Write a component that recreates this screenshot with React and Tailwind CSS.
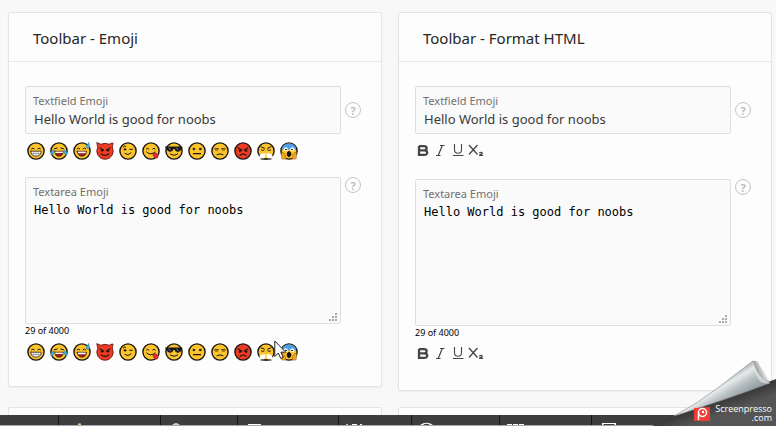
import React, { useId } from "react";

const INK = "#1b1410";

function Face({ fill = "#fcc42c", children }) {
  return (
    <svg viewBox="0 0 18 18" className="block size-[18px]" aria-hidden="true" fill="none" stroke={INK} strokeLinecap="round" strokeLinejoin="round">
      <circle cx="9" cy="9" r="8.1" fill={fill} strokeWidth="1.4" />
      {children}
    </svg>
  );
}

const emojis = [
  {
    name: "Grinning",
    art: (
      <Face>
        <path d="M4.5 6.8Q6 5 7.3 6.8M10.7 6.8Q12 5 13.5 6.8" />
        <path d="M3.8 9.2H14.2Q14 14.2 9 14.2T3.8 9.2Z" fill="#fff" strokeWidth="0.7" />
        <path d="M4.5 11.5H13.5M6.7 9.5V13.5M9 9.5V14M11.3 9.5V13.5" strokeWidth="0.3" />
      </Face>
    ),
  },
  {
    name: "Tears of joy",
    art: (
      <Face>
        <path d="M4.5 6.8L7.2 6M13.5 6.8L10.8 6" />
        <path d="M4.8 9.2H13.2Q13 14.2 9 14.2T4.8 9.2Z" fill="#a5201b" strokeWidth="0.7" />
        <path d="M5.3 9.6H12.7V11H5.3Z" fill="#fff" stroke="none" />
        <path d="M3.8 8Q0 10 1 12.4Q3.8 13.5 3.8 8ZM14.2 8Q18 10 17 12.4Q14.2 13.5 14.2 8Z" fill="#35b7f1" stroke="#1688c8" strokeWidth="0.6" />
      </Face>
    ),
  },
  {
    name: "Sweat smile",
    art: (
      <Face>
        <path d="M4 6.8Q5.5 5 6.8 6.8M10 6.8Q11.3 5 12.8 6.8" />
        <path d="M4.2 9.3H13.5Q13 14.2 9 14.2T4.2 9.3Z" fill="#a5201b" strokeWidth="0.7" />
        <path d="M5 9.6H12.7V11.2H5Z" fill="#fff" stroke="none" />
        <path d="M15.6 .8Q11.8 5.8 14.7 6.3Q18 6.2 15.6 .8Z" fill="#35b7f1" stroke="#1688c8" strokeWidth="0.6" />
      </Face>
    ),
  },
  {
    name: "Devil",
    art: (
      <svg viewBox="0 0 18 18" className="block size-[18px]" aria-hidden="true" fill="none" stroke={INK} strokeLinecap="round" strokeLinejoin="round">
        <path d="M1 1Q1.3 4 1.8 5Q-.3 9.3 1.8 13Q4.3 17.2 9 17.2T16.2 13Q18.3 9.3 16.2 5Q16.7 4 17 1Q14.9 1.1 13.2 2.3Q9 .4 4.8 2.3Q3.1 1.1 1 1Z" fill="#ef3b24" stroke="#641b18" strokeWidth="0.9" />
        <path d="M4.2 6L7.6 8.2M13.8 6L10.4 8.2" strokeWidth="1.2" />
        <circle cx="6" cy="8.5" r=".8" fill={INK} />
        <circle cx="12" cy="8.5" r=".8" fill={INK} />
        <path d="M5.2 12Q9 14.7 12.8 12" strokeWidth="1.2" />
      </svg>
    ),
  },
  {
    name: "Wink",
    art: (
      <Face>
        <path d="M4.2 5Q5.3 3.5 6.7 4.2M10.7 7.3H13.4" />
        <circle cx="6" cy="7.4" r=".8" fill={INK} />
        <path d="M6 11.6Q9.2 14 12 11" />
      </Face>
    ),
  },
  {
    name: "Yum",
    art: (
      <Face>
        <path d="M4.3 7Q5.7 5.2 7 7M10.7 7Q12 5.2 13.3 7M4.7 10Q8.5 13.8 13 10" />
        <path d="M11 12Q13.8 9.4 15.8 12.4Q17 15.8 14.3 16.2Q11.4 16 11 12Z" fill="#e92b30" stroke="#981d22" strokeWidth="0.6" />
      </Face>
    ),
  },
  {
    name: "Sunglasses",
    art: (
      <Face>
        <path d="M.8 5H17.2L16 6.2Q15.8 9.3 12.8 9.3Q10.3 9.3 9.8 6.5H8.2Q7.7 9.3 5.2 9.3Q2.2 9.3 2 6.2Z" fill="#15191e" />
        <path d="M4 6L5.5 8M11.7 6L13.2 8" stroke="#8d99a5" strokeWidth="0.8" />
        <path d="M5.3 11.8Q9 14.8 12.7 11.8" />
      </Face>
    ),
  },
  {
    name: "Neutral",
    art: (
      <Face>
        <circle cx="5.8" cy="7" r=".8" fill={INK} />
        <circle cx="12.2" cy="7" r=".8" fill={INK} />
        <path d="M5.5 11.7H12.5" strokeWidth="1.2" />
      </Face>
    ),
  },
  {
    name: "Unamused",
    art: (
      <Face>
        <path d="M3.8 6.8H7.4M10.6 6.8H14.2M6 12.6Q9 11 12 12.6" />
        <path d="M4.5 8.2H6.5M11.5 8.2H13.5" stroke="#8b5a14" />
      </Face>
    ),
  },
  {
    name: "Angry",
    art: (
      <Face fill="#ef3b24">
        <path d="M4.2 6L7.8 8M13.8 6L10.2 8" strokeWidth="1.2" />
        <circle cx="6" cy="8.7" r=".8" fill={INK} />
        <circle cx="12" cy="8.7" r=".8" fill={INK} />
        <path d="M6 13.2Q9 10.8 12 13.2" strokeWidth="1.2" />
      </Face>
    ),
  },
  {
    name: "Steaming",
    art: (
      <Face>
        <path d="M4 4.8L7.4 6.2M14 4.8L10.6 6.2M4.4 8Q5.8 9 7.2 8M10.8 8Q12.2 9 13.6 8" />
        <path d="M8 11.8Q5.600 10.800 3.600 12.600Q1.600 14.600 3.600 16.400H7Q8.800 14.500 8 11.800ZM10 11.800Q12.400 10.800 14.400 12.600Q16.400 14.600 14.400 16.400H11Q9.200 14.500 10 11.800Z" fill="#fff" stroke="#fff" strokeWidth="0.5" />
        <path d="M4 17H14" strokeWidth="1.2" />
      </Face>
    ),
  },
  {
    name: "Screaming",
    art: (
      <Face>
        <path d="M1.6 7.4Q2.5 1.6 9 1.6T16.4 7.4Z" fill="#4e9ee5" stroke="none" />
        <circle cx="5.8" cy="7.2" r="2" fill="#fff" stroke="none" />
        <circle cx="12.2" cy="7.2" r="2" fill="#fff" stroke="none" />
        <circle cx="6" cy="7.5" r=".4" fill={INK} />
        <circle cx="12" cy="7.5" r=".4" fill={INK} />
        <ellipse cx="9" cy="12" rx="1.8" ry="2.6" fill={INK} />
        <path d="M1.6 10.4Q3.4 9.4 5 12.5L6 17H2.2ZM16.4 10.4Q14.6 9.4 13 12.5L12 17H15.8Z" fill="#f2a51f" stroke="#a86412" strokeWidth="0.6" />
      </Face>
    ),
  },
];

function EmojiToolbar() {
  return (
    <div role="toolbar" aria-label="Emoji" className="flex h-[18px] gap-[5px] pl-0.5">
      {emojis.map((e) => (
        <button key={e.name} type="button" aria-label={e.name}>
          {e.art}
        </button>
      ))}
    </div>
  );
}

const formats = [
  { name: "Bold", d: "M4 4.100H9Q11.600 4.100 11.600 6.200T9 8.300H4.500M9 8.300Q12.200 8.300 12.200 10.600T9 12.900H4V4.100", sw: 2.3 },
  { name: "Italic", d: "M8 3.500H12.500M4 13.500H8.500M10.300 3.500L6.200 13.500", sw: 1.2 },
  { name: "Underline", d: "M5.500 2V7.500Q5.500 11.300 9 11.300T12.500 7.500V2M4 13.500H14.500", sw: 1.1 },
  { name: "Subscript", d: "M3 3L11.500 12.500M11.500 3L3 12.500M13.200 10.800Q16.200 9.600 16.200 11.200Q16.200 12 13.200 13.400H17", sw: 1.3 },
];

function FormatToolbar() {
  return (
    <div role="toolbar" aria-label="Format" className="flex h-5 items-start">
      {formats.map((f) => (
        <button key={f.name} type="button" aria-label={f.name} className="w-[17px]">
          <svg viewBox="0 0 18 18" className="block size-[18px]" fill="none" stroke="#454545" strokeWidth={f.sw}>
            <path d={f.d} />
          </svg>
        </button>
      ))}
    </div>
  );
}

function Help() {
  return (
    <button type="button" aria-label="Help" className="flex size-4 shrink-0 items-center justify-center rounded-full border border-[#c4c4c4] text-[11px] leading-none font-bold text-[#bdbdbd]">
      ?
    </button>
  );
}

const box = "flex min-w-0 flex-1 flex-col rounded-[2px] border border-[#dfdfdf] bg-[#fafafa] pt-1.5";
const caption = "pl-[7px] text-[11px] leading-4 text-[#707070]";

function Card({ title, Toolbar }) {
  const id = useId();
  return (
    <section className="rounded-[2px] border border-[#e4e4e4] bg-[#fdfdfd] shadow-xs">
      <h2 className="border-b border-[#e8e8e8] px-6 pt-[15px] pb-[13px] text-[15px] leading-5 text-[#262626]">{title}</h2>
      <div className="pt-6 pr-5 pb-[25px] pl-4">
        <div className="flex items-center gap-1">
          <div className={`${box} h-12`}>
            <label htmlFor={`${id}-field`} className={caption}>Textfield Emoji</label>
            <input id={`${id}-field`} defaultValue="Hello World is good for noobs" className="h-5 w-full px-2 text-[13px] leading-5 text-[#393939] outline-none" />
          </div>
          <Help />
        </div>
        <div className="mt-2 mb-[17px]">
          <Toolbar />
        </div>
        <div className="flex items-start gap-1">
          <div className={`${box} relative`}>
            <label htmlFor={`${id}-area`} className={caption}>Textarea Emoji</label>
            <textarea
              id={`${id}-area`}
              defaultValue="Hello World is good for noobs"
              className="block h-[123px] w-full resize-none px-2 font-['DejaVu_Sans_Mono','Liberation_Mono',monospace] text-[12px] leading-5 text-black outline-none"
            />
            <svg viewBox="0 0 8 8" className="absolute right-[3px] bottom-0.5 size-2" fill="#aaa" aria-hidden="true">
              <path d="M6 0h2v2h-2zM3 3h2v2h-2zM6 3h2v2h-2zM0 6h2v2h-2zM3 6h2v2h-2zM6 6h2v2h-2z" />
            </svg>
          </div>
          <Help />
        </div>
        <p className="mb-[5px] text-[9px] leading-[14px] text-black">29 of 4000</p>
        <Toolbar />
      </div>
    </section>
  );
}

const tabs = [
  { w: "w-[59px]" },
  { w: "w-[102px]", pad: "pl-[18px]", d: "M1 10V8.5H4V10", fill: "#f2c98a" },
  { w: "w-[77px]", pad: "pl-[10px]", d: "M1 10Q5 6 9 10Z", fill: "#cfcfcf" },
  { w: "w-[101px]", pad: "pl-[10px]", d: "M0 9H13V10H0Z", fill: "#fff" },
  { w: "w-[73px]", pad: "pl-[7px]", d: "M0 10L1 8.5L2 10M6 9H11V10H6M14 9H16V10H14", fill: "#fff" },
  { w: "w-[88px]", pad: "pl-[8px]", d: "M0 10Q6.500 5.500 13 10H10Q6.500 7.500 3 10Z", fill: "#fff" },
  { w: "w-[92px]", pad: "pl-[7px]", d: "M0 9H5V10H0ZM6 9H11V10H6ZM12 9H17V10H12Z", fill: "#fff" },
  { w: "flex-1", pad: "pl-[10px]", d: "M0 10V8H14V10H12.500V9H1.500V10Z", fill: "#fff" },
];

function Taskbar() {
  return (
    <div className="absolute inset-x-0 bottom-0 flex h-[11px] border-b border-[#a7a7a7] bg-[#3e3e3e]">
      {tabs.map((t, i) => (
        <div key={i} className={`${t.w} ${t.pad || ""} shrink-0 overflow-hidden border-r border-[#151515]`}>
          {t.d && (
            <svg viewBox="0 0 18 10" className="block h-[10px] w-[18px]" fill={t.fill}>
              <path d={t.d} />
            </svg>
          )}
        </div>
      ))}
    </div>
  );
}

function PageCurl() {
  return (
    <div className="absolute right-0 bottom-0 h-[68px] w-[128px]">
      <svg viewBox="0 0 128 68" className="block h-full w-full" aria-hidden="true">
        <defs>
          <linearGradient id="paper" x1="68" y1="22" x2="84" y2="48" gradientUnits="userSpaceOnUse">
            <stop offset="0" stopColor="#8f999b" />
            <stop offset="0.3" stopColor="#e6eaea" />
            <stop offset="0.6" stopColor="#b3bcbe" />
            <stop offset="1" stopColor="#8d989b" />
          </linearGradient>
          <linearGradient id="shade" x1="75" y1="37" x2="81" y2="54" gradientUnits="userSpaceOnUse">
            <stop offset="0" stopColor="#303030" />
            <stop offset="1" stopColor="#555" />
          </linearGradient>
          <linearGradient id="cast" x1="108" y1="15" x2="126" y2="8" gradientUnits="userSpaceOnUse">
            <stop offset="0" stopColor="#777" stopOpacity="0.8" />
            <stop offset="0.7" stopColor="#aaa" stopOpacity="0" />
          </linearGradient>
        </defs>
        <path d="M105 3Q110 2 112 8Q118 18 123 25L119 26Q108 16 105 3Z" fill="url(#cast)" />
        <path d="M4 68Q24 59 38 54L128 21V68Z" fill="url(#shade)" />
        <path d="M26 58Q49 46 71 29Q89 15 105 3Q109 19 122 25Q80 41 26 58Z" fill="url(#paper)" stroke="#7d8587" strokeWidth="0.6" />
        <path d="M105 3Q109 19 122 25Q115 27 111 22Q106 15 105 3Z" fill="#e9eded" fillOpacity="0.6" />
        <path d="M46 50L62 49V63H46Z" fill="#ee3e36" />
        <circle cx="54.500" cy="54.500" r="4" fill="none" stroke="#fff" strokeWidth="1.5" />
        <path d="M50.500 54.500V62" stroke="#fff" strokeWidth="1.500" />
        <circle cx="55" cy="54" r="1.200" fill="#fff" />
      </svg>
      <p className="absolute right-1 bottom-1 flex flex-col text-right font-['Open_Sans','Noto_Sans',sans-serif] text-[9px] leading-[9px] font-medium text-white">
        <span>Screenpresso</span>
        <span>.com</span>
      </p>
    </div>
  );
}

export default function App() {
  return (
    <div className="relative h-screen overflow-hidden bg-[#f8f8f8] font-['Noto_Sans','Open_Sans',sans-serif]">
      <main className="grid grid-cols-2 items-start gap-4 pt-3 pr-1 pl-2">
        <Card title="Toolbar - Emoji" Toolbar={EmojiToolbar} />
        <Card title="Toolbar - Format HTML" Toolbar={FormatToolbar} />
        <section className="h-24 rounded-[2px] border border-[#e4e4e4] bg-[#fdfdfd]" />
        <section className="h-24 rounded-[2px] border border-[#e4e4e4] bg-[#fdfdfd]" />
      </main>
      <Taskbar />
      <PageCurl />
      <svg viewBox="0 0 13 20" className="absolute top-[340px] left-[274px] h-5 w-[13px]" aria-hidden="true">
        <path d="M.8 1V16.500L4.300 13L6.800 18.500L9.300 17.300L6.900 12.200H11.800Z" fill="#fff" stroke="#222" strokeWidth="1" />
      </svg>
    </div>
  );
}
